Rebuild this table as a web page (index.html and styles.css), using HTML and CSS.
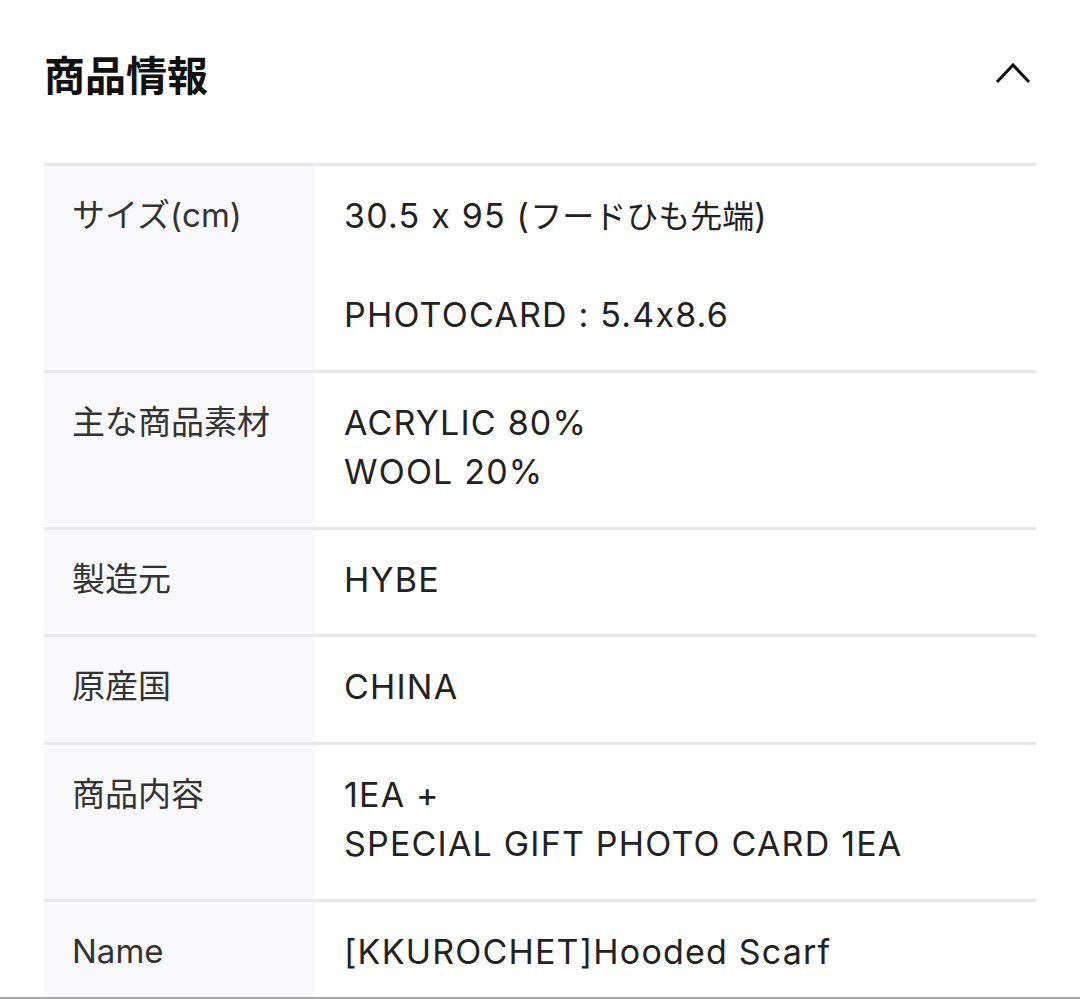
FILE: index.html
```html
<!DOCTYPE html>
<html lang="ja">
<head>
<meta charset="utf-8">
<link rel="stylesheet" href="styles.css">
</head>
<body>
<div class="page">
  <div class="header">
    <h2 class="title">商品情報</h2>
    <svg class="chev" width="40" height="24" viewBox="0 0 40 24"><polyline points="3,21 19,4 35,21" fill="none" stroke="#111" stroke-width="3"/></svg>
  </div>
  <div class="table">
    <div class="row">
      <div class="label">サイズ(cm)</div>
      <div class="value">30.5 x 95 (<span class="ja">フードひも先端</span>)<br><br>PHOTOCARD : 5.4x8.6</div>
    </div>
    <div class="row">
      <div class="label">主な商品素材</div>
      <div class="value">ACRYLIC 80%<br>WOOL 20%</div>
    </div>
    <div class="row">
      <div class="label">製造元</div>
      <div class="value">HYBE</div>
    </div>
    <div class="row">
      <div class="label">原産国</div>
      <div class="value">CHINA</div>
    </div>
    <div class="row">
      <div class="label">商品内容</div>
      <div class="value">1EA +<br>SPECIAL GIFT PHOTO CARD 1EA</div>
    </div>
    <div class="row">
      <div class="label">Name</div>
      <div class="value">[KKUROCHET]Hooded Scarf</div>
    </div>
  </div>
</div>
<div class="bottom-edge"></div>
</body>
</html>
```

FILE: styles.css
```css
html, body {
  margin: 0;
  padding: 0;
  background: #fff;
}
body {
  font-family: Inter, "Noto Sans CJK JP", sans-serif;
  font-feature-settings: "calt" 0;
  color: #222;
}
.page {
  padding: 45px 44px 0 44px;
}
.header {
  display: flex;
  align-items: center;
  justify-content: space-between;
  height: 56px;
  margin-bottom: 62px;
}
.title {
  margin: 0;
  font-family: "Noto Sans CJK JP", sans-serif;
  font-size: 41px;
  font-weight: 700;
  line-height: 56px;
  color: #111;
}
.chev {
  margin-right: 2px;
  margin-top: 0;
}
.table {
  display: flex;
  flex-direction: column;
}
.row {
  display: grid;
  grid-template-columns: 271px 1fr;
  border-top: 3px solid #e6e8eb;
}
.label {
  background: #f9f9fb;
  padding: 25px 0 30px 28px;
  font-size: 33px;
  line-height: 49.5px;
  color: #333;
}
.value {
  padding: 25px 0 30px 29px;
  font-size: 34px;
  line-height: 49.5px;
  letter-spacing: 1.2px;
  color: #222;
}
.ja {
  font-size: 32px;
  line-height: 1;
  letter-spacing: 0;
}
.bottom-edge {
  position: fixed;
  left: 0;
  right: 0;
  bottom: 0;
  height: 2px;
  background: #a8a8a8;
}
```
